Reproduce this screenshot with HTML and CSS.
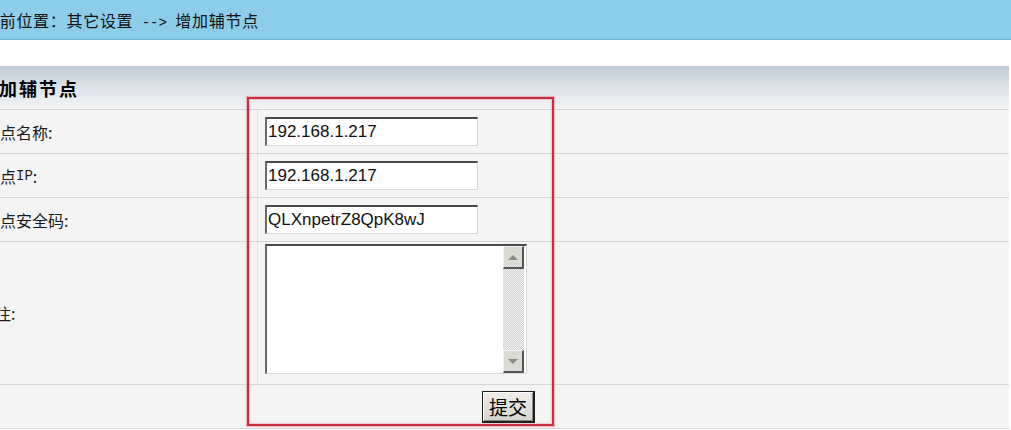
FILE: index.html
```html
<!DOCTYPE html>
<html lang="zh-CN">
<head>
<meta charset="utf-8">
<title>增加辅节点</title>
<link rel="stylesheet" href="styles.css">
</head>
<body>
<div class="page">
  <div class="crumb">当前位置：其它设置<span class="mono"> --&gt; </span>增加辅节点</div>
  <div class="panel">
    <div class="panel-title">增加辅节点</div>
    <div class="form">
      <div class="cell label">节点名称:</div>
      <div class="cell value"><input class="field" type="text" value="192.168.1.217"></div>
      <div class="cell rest"></div>

      <div class="cell label">节点<span class="latin">IP</span>:</div>
      <div class="cell value"><input class="field" type="text" value="192.168.1.217"></div>
      <div class="cell rest"></div>

      <div class="cell label">节点安全码:</div>
      <div class="cell value"><input class="field" type="text" value="QLXnpetrZ8QpK8wJ"></div>
      <div class="cell rest"></div>

      <div class="cell label tall label-memo">备注:</div>
      <div class="cell value tall top">
        <div class="memo">
          <textarea class="memo-input"></textarea>
          <div class="vscroll">
            <span class="sbtn up"></span>
            <span class="track"></span>
            <span class="sbtn down"></span>
          </div>
        </div>
      </div>
      <div class="cell rest tall"></div>

      <div class="cell label last"></div>
      <div class="cell value last end"><button class="submit" type="button">提交</button></div>
      <div class="cell rest last"></div>
    </div>
  </div>
</div>
<div class="annot"></div>
</body>
</html>
```

FILE: styles.css
```css
html, body {
  margin: 0;
  padding: 0;
  background: #ffffff;
  overflow: hidden;
}

body {
  width: 1011px;
  height: 430px;
  position: relative;
  font-family: "Noto Sans CJK SC", "Liberation Sans", sans-serif;
  color: #111;
}

.page {
  margin-left: -22px;
}

.crumb {
  height: 39px;
  line-height: 40px;
  background: #8ccde9;
  border-bottom: 1px solid #6fb6d6;
  padding-left: 5px;
  font-size: 16px;
  letter-spacing: 0.7px;
  color: #111;
  white-space: nowrap;
}

.mono {
  font-family: "Liberation Mono", monospace;
  font-size: 14px;
  letter-spacing: 0;
}

.panel {
  margin-top: 26px;
  margin-right: 2px;
  background: #f4f4f4;
}

.panel-title {
  height: 43px;
  line-height: 44px;
  padding-left: 1px;
  font-size: 18px;
  letter-spacing: 2px;
  font-weight: bold;
  color: #000;
  background: linear-gradient(#c0ccd8 0%, #dde3e9 50%, #f3f4f6 100%);
  border-bottom: 1px solid #d2d2d2;
}

.form {
  display: grid;
  grid-template-columns: 279px 288px 1fr;
}

.cell {
  height: 43px;
  border-bottom: 1px solid #d6d6d6;
  display: flex;
  align-items: center;
  box-sizing: content-box;
}

.cell.tall {
  height: 142px;
}

.cell.top {
  align-items: flex-start;
}

.label {
  padding-left: 6px;
  font-size: 16px;
  color: #1a1a1a;
}

.label-memo {
  padding-left: 1px;
  padding-top: 0;
}

.latin {
  font-family: "Liberation Mono", monospace;
  font-size: 14px;
}

.value {
  border-left: 1px solid #e2e2e2;
  padding-left: 7px;
}

.value.top {
  padding-top: 2px;
  height: 140px;
}

.value.last {
  border-left-color: transparent;
}

.value.end {
  justify-content: flex-end;
  padding-right: 10px;
}

.field {
  width: 213px;
  height: 29px;
  box-sizing: border-box;
  margin: 0;
  padding: 0 0 0 1px;
  border-style: solid;
  border-width: 2px 1px 1px 2px;
  border-color: #4a4a4a #d8d8d8 #d8d8d8 #6a6a6a;
  background: #fff;
  font-family: "Liberation Sans", Arial, sans-serif;
  font-size: 17px;
  color: #111;
  outline: none;
}

.memo {
  width: 262px;
  height: 130px;
  box-sizing: border-box;
  display: flex;
  border-style: solid;
  border-width: 2px 1px 1px 2px;
  border-color: #4a4a4a #d8d8d8 #d8d8d8 #6a6a6a;
  background: #fff;
}

.memo-input {
  flex: 1;
  border: 0;
  margin: 0;
  padding: 2px;
  resize: none;
  outline: none;
  background: #fff;
  font-family: "Liberation Sans", Arial, sans-serif;
  font-size: 15px;
}

.vscroll {
  width: 21px;
  display: flex;
  flex-direction: column;
  margin-right: 2px;
}

.sbtn {
  height: 23px;
  box-sizing: border-box;
  background: #dcdad4;
  border-style: solid;
  border-width: 1px 2px 2px 1px;
  border-color: #f2f2f2 #555 #555 #f2f2f2;
  display: flex;
  align-items: center;
  justify-content: center;
}

.sbtn::before {
  content: "";
  width: 0;
  height: 0;
  border-left: 5px solid transparent;
  border-right: 5px solid transparent;
}

.sbtn.up::before {
  border-bottom: 5px solid #8a8a8a;
}

.sbtn.down::before {
  border-top: 5px solid #8a8a8a;
}

.track {
  flex: 1;
  background: repeating-conic-gradient(#cfcfcf 0 25%, #f4f4f4 0 50%) 0 0 / 2px 2px;
}

.submit {
  width: 53px;
  height: 32px;
  box-sizing: border-box;
  margin: 0;
  padding: 0;
  background: linear-gradient(#eeede9, #d6d4ce);
  border: 1px solid #1e1e1e;
  border-right-width: 2px;
  border-bottom-width: 2px;
  box-shadow: inset 1px 1px 0 #ffffff, inset -1px -1px 0 #8a8a8a;
  font-family: "Noto Sans CJK SC", sans-serif;
  font-size: 19px;
  color: #000;
  line-height: 1;
}

.annot {
  position: absolute;
  left: 247px;
  top: 97px;
  width: 307px;
  height: 329px;
  box-sizing: border-box;
  border: 2px solid #c9303f;
  box-shadow: 0 0 1px 1px rgba(230, 120, 130, 0.45), inset 0 0 1px 1px rgba(230, 120, 130, 0.35);
  pointer-events: none;
}
```
